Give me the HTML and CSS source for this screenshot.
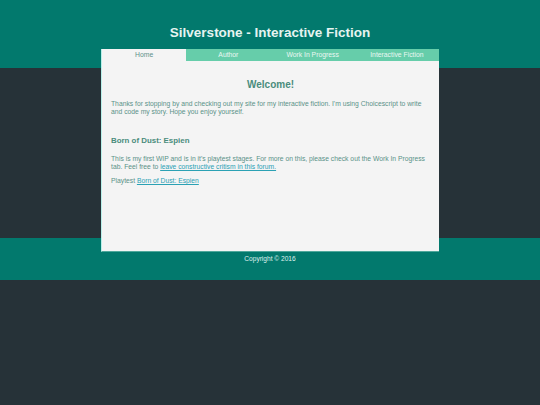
FILE: index.html
```html
<!DOCTYPE html>
<html lang="en">
<head>
<meta charset="utf-8">
<title>Silverstone - Interactive Fiction</title>
<link rel="stylesheet" href="styles.css">
</head>
<body>
<header class="site-header">
  <h1 class="site-title">Silverstone - Interactive Fiction</h1>
</header>
<div class="page">
  <nav class="tabs">
    <a class="tab active" href="#">Home</a>
    <a class="tab" href="#">Author</a>
    <a class="tab" href="#">Work In Progress</a>
    <a class="tab" href="#">Interactive Fiction</a>
  </nav>
  <main class="content">
    <h2 class="welcome">Welcome!</h2>
    <p class="text">Thanks for stopping by and checking out my site for my interactive fiction. I'm using Choicescript to write and code my story. Hope you enjoy yourself.</p>
    <h3 class="story-title">Born of Dust: Espien</h3>
    <p class="text">This is my first WIP and is in it's playtest stages. For more on this, please check out the Work In Progress tab. Feel free to <a class="link" href="#">leave constructive critism in this forum.</a></p>
    <p class="text playtest">Playtest <a class="link" href="#">Born of Dust: Espien</a></p>
  </main>
</div>
<footer class="site-footer">Copyright © 2016</footer>
</body>
</html>
```
FILE: styles.css
```css
html, body {
  margin: 0;
  padding: 0;
}
body {
  font-family: "Liberation Sans", Arial, sans-serif;
  min-height: 405px;
  background: linear-gradient(to bottom,
    #02796d 0, #02796d 68px,
    #263238 68px, #263238 238px,
    #02796d 238px, #02796d 280px,
    #263238 280px);
}
.site-header {
  height: 49px;
  box-sizing: border-box;
  padding-top: 25px;
}
.site-title {
  margin: 0;
  text-align: center;
  font-size: 13.5px;
  line-height: 16px;
  font-weight: bold;
  color: #e6f4f1;
}
.page {
  width: 338px;
  margin: 0 auto;
  background: #f4f4f4;
  box-sizing: border-box;
  border-left: 1px solid #b9efe9;
  border-bottom: 1px solid #4fa79b;
}
.tabs {
  display: flex;
  height: 12px;
}
.tab {
  flex: 1;
  text-align: center;
  font-size: 6.8px;
  line-height: 12px;
  color: #eaf7f2;
  background: #66cdaa;
  text-decoration: none;
}
.tab.active {
  background: #f4f4f4;
  color: #5f918a;
}
.content {
  padding: 0 9px;
  min-height: 190px;
  box-sizing: border-box;
  overflow: hidden;
  color: #5a9288;
}
.welcome {
  margin: 18px 0 0;
  text-align: center;
  font-size: 10px;
  line-height: 12px;
  font-weight: bold;
  color: #4a8c7c;
}
.text {
  margin: 9px 0 0;
  font-size: 6.75px;
  line-height: 8px;
}
.story-title {
  margin: 20px 0 0;
  font-size: 7.9px;
  line-height: 10px;
  font-weight: bold;
  color: #4a8c7c;
}
.playtest {
  margin-top: 6px;
}
.link {
  color: #2ba1b4;
  text-decoration: underline;
}
.site-footer {
  margin-top: 3px;
  text-align: center;
  font-size: 6.6px;
  line-height: 8px;
  color: #dff1ee;
}
```
